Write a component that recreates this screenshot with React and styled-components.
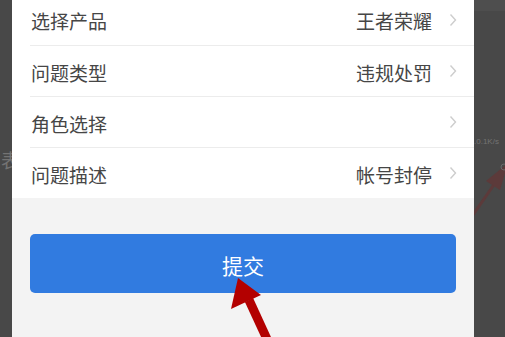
import React from 'react'
import styled, { createGlobalStyle } from 'styled-components'

const GlobalStyle = createGlobalStyle`
  html, body {
    margin: 0;
    padding: 0;
    background: #484848;
  }
  body {
    font-family: "Noto Sans CJK SC", "Noto Sans", sans-serif;
  }
`

const Screen = styled.div`
  position: relative;
  width: 505px;
  height: 337px;
  overflow: hidden;
  display: flex;
  background: #484848;
`

const Backdrop = styled.div`
  position: relative;
  width: ${p => p.$width}px;
  flex-shrink: 0;
  background: #484848;
  overflow: hidden;
  display: flex;
  flex-direction: column;
  align-items: ${p => (p.$side === 'left' ? 'flex-end' : 'flex-start')};
`

const StatusBand = styled.div`
  height: 11px;
  width: 100%;
  background: #4e4e4e;
`

const GhostText = styled.span`
  margin-top: ${p => p.$top}px;
  font-size: ${p => p.$size}px;
  line-height: 1;
  color: #737373;
  white-space: nowrap;
  font-family: ${p => (p.$latin ? '"Liberation Sans", Arial, sans-serif' : '"Noto Sans CJK SC", sans-serif')};
`

const LeftGhost = styled(GhostText)`
  margin-right: -8px;
`

const BehindArrow = styled.svg`
  position: absolute;
  left: 0;
  top: 0;
`

const Panel = styled.div`
  width: 462px;
  flex-shrink: 0;
  display: flex;
  flex-direction: column;
  background: #f3f3f3;
`

const List = styled.ul`
  list-style: none;
  margin: -6px 0 0;
  padding: 0;
  background: #ffffff;
`

const Row = styled.li`
  height: 51px;
  margin-left: 18px;
  padding: 0 17px 0 1px;
  display: flex;
  align-items: center;
  border-top: ${p => (p.$first ? 'none' : '1px solid #ececec')};
  box-sizing: border-box;
`

const Label = styled.span`
  flex: 1;
  font-size: 19px;
  color: #464646;
  padding-top: 2px;
`

const Value = styled.span`
  font-size: 19px;
  color: #464646;
  margin-right: 20px;
  padding-top: 2px;
`

const Chevron = styled.svg`
  width: 8px;
  height: 14px;
  flex-shrink: 0;
  margin-left: -3px;
`

const Footer = styled.div`
  flex: 1;
  padding: 36px 18px 0;
`

const SubmitButton = styled.button`
  width: 100%;
  height: 59px;
  border: none;
  border-radius: 5px;
  background: #317be0;
  color: #ffffff;
  font-family: "Noto Sans CJK SC", sans-serif;
  font-size: 21px;
  padding-top: 4px;
  cursor: pointer;
`

const Annotation = styled.svg`
  position: absolute;
  left: 0;
  top: 0;
  pointer-events: none;
`

const rows = [
  { label: '选择产品', value: '王者荣耀' },
  { label: '问题类型', value: '违规处罚' },
  { label: '角色选择', value: '' },
  { label: '问题描述', value: '帐号封停' },
]

const Arrow = () => (
  <Chevron viewBox="0 0 8 14">
    <path d="M1.5 1.5 L6.5 7 L1.5 12.5" fill="none" stroke="#cdcdcd" strokeWidth="1.4" />
  </Chevron>
)

export default function App() {
  return (
    <>
      <GlobalStyle />
      <Screen>
        <Backdrop $width={12} $side="left">
          <LeftGhost $top={150} $size={19}>表</LeftGhost>
        </Backdrop>
        <Panel>
          <List>
            {rows.map((r, i) => (
              <Row key={r.label} $first={i === 0}>
                <Label>{r.label}</Label>
                {r.value && <Value>{r.value}</Value>}
                <Arrow />
              </Row>
            ))}
          </List>
          <Footer>
            <SubmitButton>提交</SubmitButton>
          </Footer>
        </Panel>
        <Backdrop $width={31} $side="right">
          <StatusBand />
          <GhostText $top={127} $size={8} $latin>.0.1K/s</GhostText>
          <BehindArrow width="31" height="337" viewBox="474 0 31 337">
            <line x1="468" y1="222" x2="500" y2="176" stroke="#5c3a3a" strokeWidth="3" />
            <polygon points="508,163 486,181 500,190" fill="#5c3a3a" />
            <circle cx="504" cy="167" r="3" fill="none" stroke="#6a6a6a" strokeWidth="1" />
          </BehindArrow>
        </Backdrop>
        <Annotation width="505" height="337" viewBox="0 0 505 337">
          <line x1="249" y1="300" x2="272" y2="350" stroke="#b30000" strokeWidth="9" />
          <polygon points="238,278 231,309 261,295" fill="#b30000" />
        </Annotation>
      </Screen>
    </>
  )
}
